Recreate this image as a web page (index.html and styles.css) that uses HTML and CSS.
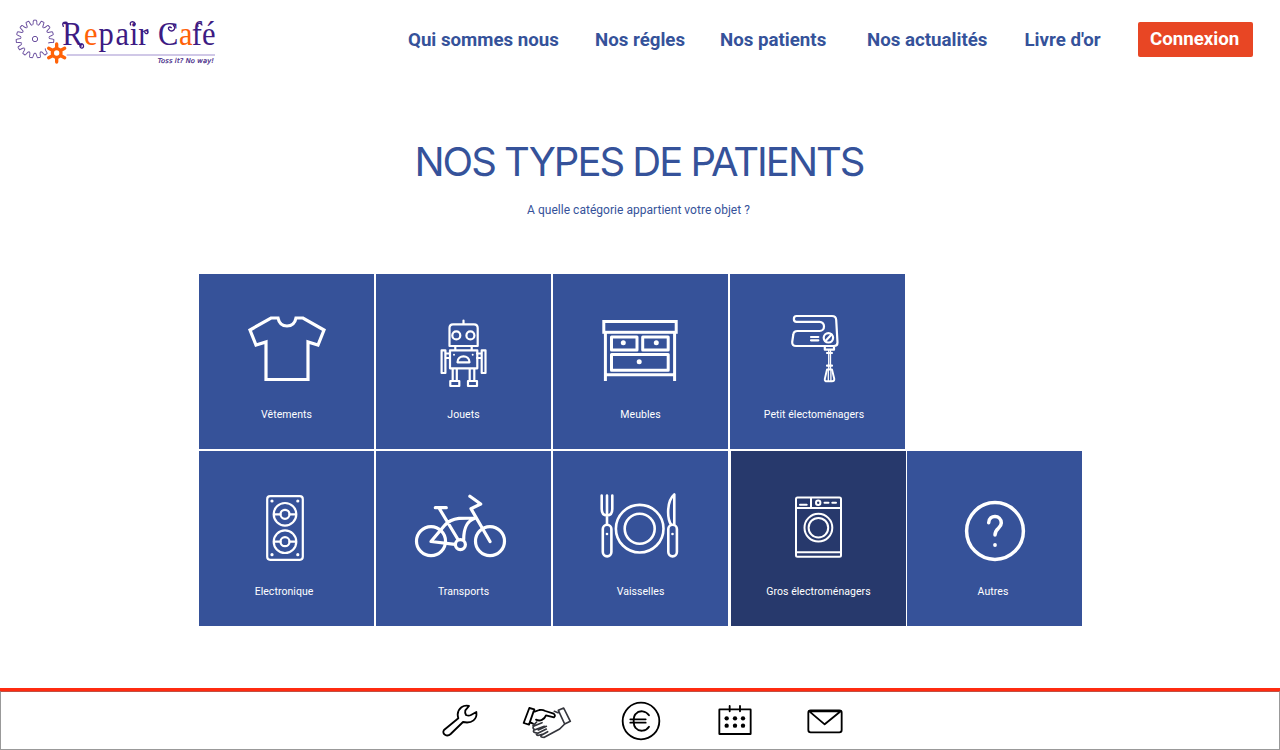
FILE: index.html
```html
<!DOCTYPE html>
<html lang="fr">
<head>
<meta charset="utf-8">
<title>Repair Café</title>
<link rel="stylesheet" href="styles.css">
</head>
<body>
<header class="header">
  <a class="logo">
    <svg width="230" height="75" viewBox="0 0 690 225">
      <defs><path id="tooth" d="M-8.7-41C-3-43-7-56-4-56.500H4C7-56 3-43 8.700-41"/></defs>
      <g class="gear" transform="translate(105 102)">
        <use href="#tooth"/><use href="#tooth" transform="rotate(24)"/><use href="#tooth" transform="rotate(48)"/><use href="#tooth" transform="rotate(72)"/><use href="#tooth" transform="rotate(96)"/><use href="#tooth" transform="rotate(144)"/><use href="#tooth" transform="rotate(168)"/><use href="#tooth" transform="rotate(192)"/><use href="#tooth" transform="rotate(216)"/><use href="#tooth" transform="rotate(240)"/><use href="#tooth" transform="rotate(264)"/><use href="#tooth" transform="rotate(288)"/><use href="#tooth" transform="rotate(312)"/><use href="#tooth" transform="rotate(336)"/>
        <circle r="8"/>
      </g>
      <g class="cog" transform="translate(170 144)">
        <circle r="13"/>
        <path d="M0-15V-27M0 15V27M-13-8L-24-14M13-8L24-14M-13 8L-24 14M13 8L24 14"/>
      </g>
      <path class="logo-line" d="M200 150H645"/>
      <text class="logo-name" transform="scale(.88 1)" y="121" x="212.500 286 336 394 442 471 538.500 610 654 689">R<tspan class="accent">e</tspan>pairC<tspan class="accent">a</tspan>fé</text>
      <g class="curl">
        <path d="M190 64Q183 50 201 52M240 117C236 133 254 133 250 120C246 112 238 119 244 123M392 60C386 50 402 46 406 57M442 76C448 86 437 90 434 81M520 60C530 71 519 82 509 76C501 70 508 62 514 68M606 60C600 50 589 56 594 64"/>
      </g>
      <text class="logo-tag" x="473" y="175" textLength="169">Toss it? No way!</text>
    </svg>
  </a>
  <nav class="nav">
    <a class="nav-about">Qui sommes nous</a>
    <a class="nav-rules">Nos régles</a>
    <a class="nav-patients">Nos patients</a>
    <a class="nav-news">Nos actualités</a>
    <a class="nav-book">Livre d'or</a>
  </nav>
  <a class="login">Connexion</a>
</header>

<main class="main">
  <h1 class="title">NOS TYPES DE PATIENTS</h1>
  <p class="subtitle">A quelle catégorie appartient votre objet ?</p>
  <div class="tiles">
    <div class="row">
      <a class="tile">
        <svg class="icon" viewBox="199 274 175 130" stroke-width="3.2"><path stroke-linejoin="miter" d="M278 318H271L250 330L256 345L266 342V379.500H308V342L318 345L324 330L303 318H296C295 323 291.500 326 287 326S279 323 278 318Z"/></svg>
        <span class="label">Vêtements</span>
      </a>
      <a class="tile">
        <svg class="icon" viewBox="376 274 175 130" stroke-width="2.200"><path d="M463.500 320.500V324M455.300 346V350M471.700 346V350M446 353.500H450M446 358H450M477 353.500H481M477 358H481M452.700 369V380.500M456.800 369V380.500M469.700 369V380.500M474.300 369V380.500M457.500 362.300H469.500C469.500 354.500 457.500 354.500 457.500 362.300Z"/><path d="M449.500 346V328Q449.500 324.300 453 324.300H474Q477.700 324.300 477.700 328V346Z"/><circle cx="456.300" cy="335.400" r="4"/><circle cx="470.400" cy="335.400" r="4"/><rect x="450" y="350.300" width="27.300" height="18"/><rect x="441.600" y="350.300" width="3.800" height="22.700"/><rect x="481.700" y="350.300" width="3.800" height="22.700"/><rect x="450.300" y="381" width="9" height="5"/><rect x="468" y="381" width="9" height="5"/><g class="solid"><circle cx="454" cy="354.700" r="1"/><circle cx="472.700" cy="354.700" r="1"/></g></svg>
        <span class="label">Jouets</span>
      </a>
      <a class="tile">
        <svg class="icon" viewBox="553 274 175 130" stroke-width="3"><g stroke-linejoin="miter"><rect x="603.800" y="321.500" width="72.400" height="10.800"/><path stroke-linecap="butt" d="M605.400 333V381M674.600 333V381M605 374.800H675"/></g><rect x="611.500" y="337" width="25.500" height="13"/><rect x="642.700" y="337" width="25.500" height="13"/><rect x="611.500" y="354.500" width="56.700" height="15.700"/><g class="solid"><circle cx="623.300" cy="342.700" r="2.500"/><circle cx="656.300" cy="342.700" r="2.500"/><circle cx="639.200" cy="361.700" r="2.500"/></g></svg>
        <span class="label">Meubles</span>
      </a>
      <a class="tile tile-small">
        <svg class="icon" viewBox="730 274 175 130" stroke-width="2.200"><path d="M796.500 316H832Q836 316 836.200 320L837.500 342.500Q837.500 346 834 346H796Q792 346 792.200 342L793.300 334.500Q793.700 331 797.500 331H819.500C825.500 331 825.500 321.800 819.500 321.800H796.500C793 321.800 793 316 796.500 316ZM811 337H818.300M811 340.300H818.300M825.500 341L831.500 334.500M824.800 347V349.700H834V347M827 353H832M827 365.700H832"/><path stroke-width="1.300" d="M828.700 350V369M830.500 350V369M828.300 370V381M830.900 370V381"/><path stroke-width="1.900" d="M827 369.500H832L834.300 379Q834.300 381.300 832 381.300H827Q824.500 381.300 824.800 379Z"/><circle cx="828.400" cy="337.800" r="4.700"/></svg>
        <span class="label">Petit électoménagers</span>
      </a>
    </div>
    <div class="row">
      <a class="tile tile-electronic">
        <svg class="icon" viewBox="199 451 175 130" stroke-width="2.200"><rect x="267.200" y="496.200" width="35.600" height="63.600" rx="3"/><circle cx="285" cy="514.300" r="11.300"/><circle cx="285" cy="514.300" r="4.500"/><circle cx="285" cy="541.700" r="11.300"/><circle cx="285" cy="541.700" r="4.500"/><path d="M274 514.300H280.500M289.500 514.300H296M274 541.700H280.500M289.500 541.700H296"/><g class="solid"><circle cx="272" cy="501" r="1.600"/><circle cx="297.800" cy="501" r="1.600"/><circle cx="272" cy="554.700" r="1.600"/><circle cx="297.800" cy="554.700" r="1.600"/></g></svg>
        <span class="label">Electronique</span>
      </a>
      <a class="tile">
        <svg class="icon" viewBox="376 451 175 130" stroke-width="3.200"><circle cx="431" cy="541.200" r="14.500"/><circle cx="490" cy="541.200" r="14.500"/><circle cx="460.400" cy="544.600" r="5"/><path d="M435.300 507.700H446.300M439.300 508.500L458 539.500M455 544.300L431 541.500L444.500 525.500Q449.500 519.500 459 518.300L475.500 518C466 521 463.700 529 463.700 539.500M490 541.500L471 508.700L480.700 504L469.900 496.300"/></svg>
        <span class="label">Transports</span>
      </a>
      <a class="tile">
        <svg class="icon" viewBox="553 451 175 130" stroke-width="2.600"><path d="M601.700 495.500V509Q601.700 515.500 607 515.500T612.300 509V495.500M607 495.500V524.500M674.300 494.500V524.500M674.300 494.500C666.500 501 667 518 671 524.500"/><rect x="602.800" y="524.800" width="8.600" height="31.600" rx="4.300"/><rect x="668.300" y="524.800" width="8.600" height="31.600" rx="4.300"/><circle cx="639.700" cy="528.700" r="23.800"/><circle cx="639.700" cy="528.700" r="15"/><g class="solid"><circle cx="607" cy="534" r="1.300"/><circle cx="672.500" cy="534" r="1.300"/></g></svg>
        <span class="label">Vaisselles</span>
      </a>
      <a class="tile tile-active">
        <svg class="icon" viewBox="731 451 175 130" stroke-width="2"><rect x="796" y="497.500" width="45" height="59.300" rx="1.500"/><path d="M796 508H841M811 498V508M800 504.700H806.700M824.500 502.700H828.500M832.300 502.700H836M796 552.300H841"/><circle cx="818.200" cy="502.700" r="2.200"/><circle cx="818.400" cy="527.700" r="13.900"/><circle cx="818.400" cy="527.700" r="9.800"/></svg>
        <span class="label">Gros électroménagers</span>
      </a>
      <a class="tile tile-other">
        <svg class="icon" viewBox="907 451 175 130" stroke-width="3.500"><circle cx="995" cy="531" r="28.400"/><path d="M988.700 522.700C989 514 1001.300 514.500 1001.300 523C1001.300 528.500 995 528 995 535"/><circle class="solid" cx="995" cy="545" r="1.900"/></svg>
        <span class="label">Autres</span>
      </a>
    </div>
  </div>
</main>

<footer class="footer">
  <div class="toolbar">
    <svg class="tool wrench" width="40" height="38" viewBox="30 66 120 114"><path d="M42 150L85 115Q83 108 83 103C85 84 100 74 117 78L106 91Q104 98 108 105Q116 109 123 105L139 96C142 117 127 132 99 126L62 162C51 172 34 162 42 150Z"/></svg>
    <svg class="tool shake" width="52" height="38" viewBox="273 66 156 114"><path d="M298 84L313 88L297 134L281 129ZM314 95L328 90Q337 88 346 93L371 101Q378 107 372 112L348 106C343 119 330 125 318 119M302 128L309 131"/><g class="sleeve"><path d="M385 91L401 84L421 124L404 132ZM373 94L384 98M404 132L389 147L343 172Q329 172 334 166L353 155M337 163Q319 170 319 162L349 147M324 159Q307 159 311 151L343 139M314 149Q305 143 312 138L336 128M320 126L309 137M325 150L349 139"/></g></svg>
    <svg class="tool euro" width="40" height="40" viewBox="573 63 120 120"><circle cx="633" cy="123" r="55"/><path d="M657 106C648 92 628 89 617 102Q611 108 611 123Q611 138 617 144C628 157 648 154 657 140M601 118H647M601 128H647"/></svg>
    <svg class="tool calendar" width="36" height="34" viewBox="140 72 108 102"><rect x="147" y="88" width="94" height="74" rx="1"/><path d="M178 78V94M209 78V94"/><g class="dots"><circle cx="169" cy="115" r="6.500"/><circle cx="194" cy="115" r="6.500"/><circle cx="218" cy="115" r="6.500"/><circle cx="169" cy="137" r="6.500"/><circle cx="194" cy="137" r="6.500"/><circle cx="218" cy="137" r="6.500"/></g></svg>
    <svg class="tool mail" width="38" height="34" viewBox="408 72 114 102"><rect x="415" y="91" width="100" height="66" rx="7"/><path d="M418 94H512M418 94L464 133L512 94"/></svg>
  </div>
</footer>
</body>
</html>
```

FILE: styles.css
```css
* { box-sizing: border-box; }
body {
  margin: 0;
  height: 750px;
  display: flex;
  flex-direction: column;
  background: #fff;
  color: #35529a;
  font-family: Roboto, sans-serif;
  overflow: hidden;
}
.header { height: 80px; display: flex; align-items: flex-start; padding-top: 5px; }
.logo { width: 230px; height: 75px; flex: none; }
.gear { fill: none; stroke: #6b509f; stroke-width: 3; }
.cog { fill: none; stroke: #ff6208; stroke-width: 10; stroke-linecap: round; }
.logo-line { stroke: #c1b6df; stroke-width: 5; }
.logo-name { font-family: "Liberation Serif", serif; font-size: 104px; fill: #3d1b83; }
.accent { fill: #ff6208; }
.curl { fill: none; stroke: #3d1b83; stroke-width: 4; stroke-linecap: round; }
.logo-tag { font: italic 20px "DejaVu Sans", sans-serif; fill: #3d1b83; stroke: #3d1b83; stroke-width: .6; }

.nav { display: flex; padding: 23px 0 0 178px; font-weight: 700; font-size: 18.700px; line-height: 24px; white-space: nowrap; }
.nav a { flex: none; }
.nav-about { width: 187px; }
.nav-rules { width: 125px; }
.nav-patients { width: 147px; }
.nav-news { width: 157.500px; }
.nav-book { width: 113.500px; }
.login {
  flex: none;
  width: 115px;
  height: 35px;
  margin-top: 17px;
  border-radius: 2px;
  background: #e84624;
  color: #fff;
  font-weight: 700;
  font-size: 18.700px;
  line-height: 34px;
  padding-left: 12px;
}

.main { flex: 1; }
.title {
  margin: 57px 0 0;
  font: 400 40px/48px Inter, sans-serif;
  letter-spacing: -2px;
  padding: 1px 2px 0 0;
  text-align: center;
}
.subtitle { margin: 16px 3px 0 0; height: 16px; font-size: 12px; line-height: 16px; letter-spacing: .03px; text-align: center; }
.tiles { padding: 56px 0 0 199px; display: flex; flex-direction: column; gap: 2px; }
.row { display: flex; gap: 2px; }
.tile { width: 175px; height: 175px; background: #365299; display: flex; flex-direction: column; }
.tile-active { background: #27396c; margin: 0 -1px 0 1px; }
.icon { width: 175px; height: 130px; flex: none; fill: none; stroke: #fff; stroke-linecap: round; stroke-linejoin: round; }
.solid { fill: #fff; stroke: none; }
.label { color: #fff; font-size: 10.500px; line-height: 21px; letter-spacing: .05px; text-align: center; }
.tile-small .label { padding-right: 7px; }
.tile-electronic .label { padding-right: 5px; }
.tile-other .label { padding-right: 3px; }

.footer { height: 62px; border-top: 3px solid #ff2b10; flex: none; }
.toolbar { height: 59px; border: 1px solid #999; border-top-color: #c34f43; display: flex; align-items: flex-start; padding: 10px 0 0 439px; }
.tool { flex: none; fill: none; stroke: #000; stroke-width: 5.500; stroke-linecap: round; stroke-linejoin: round; }
.shake { margin-left: 41px; }
.sleeve { stroke: #34353c; stroke-width: 5; }
.euro { margin: -1px 0 0 48px; }
.calendar { margin: 2px 0 0 56px; }
.mail { margin: 2px 0 0 52.500px; }
.dots { fill: #000; stroke: none; }
```
